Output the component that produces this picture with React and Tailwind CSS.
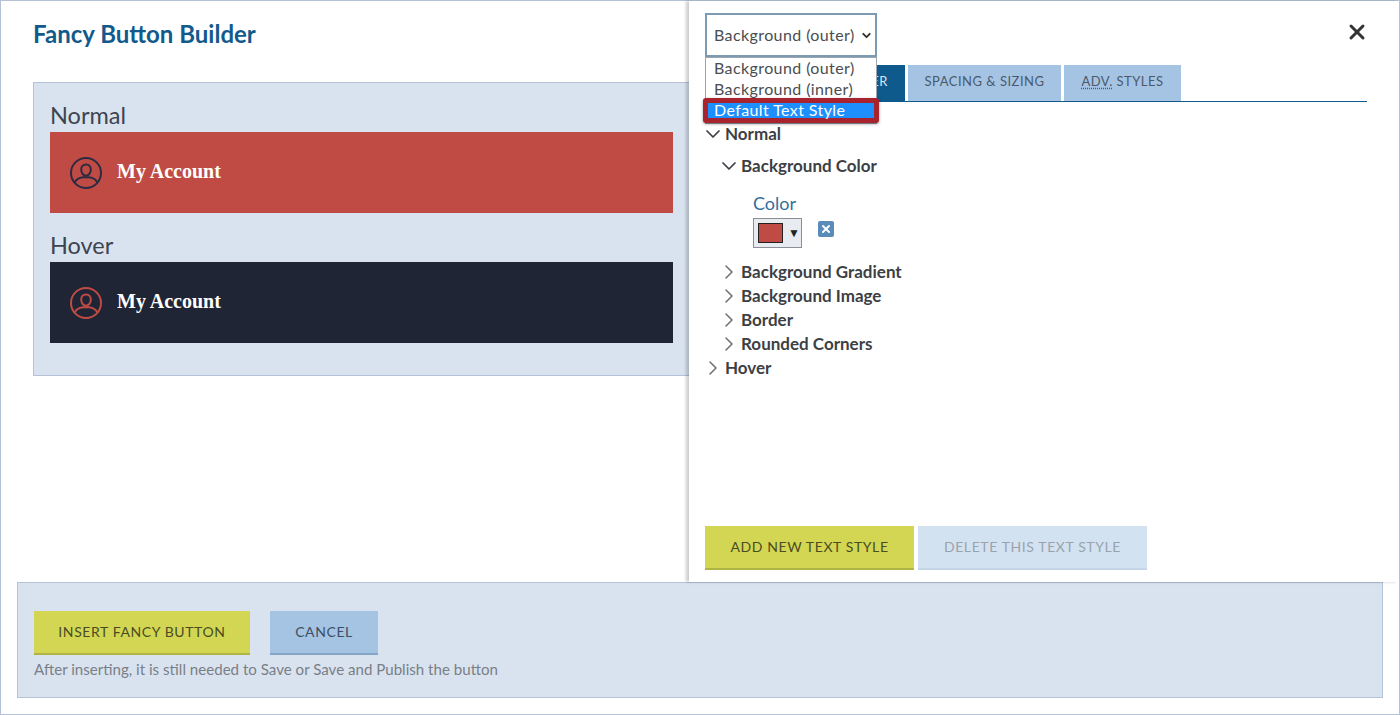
import React from 'react';
import { ChevronDown, ChevronRight, X } from 'lucide-react';

const sans = "font-['Lato','Noto_Sans',sans-serif]";

const AccountIcon = ({ color }) => (
  <svg width="32" height="32" viewBox="0 0 32 32" fill="none" stroke={color} strokeWidth="2">
    <circle cx="16" cy="16" r="15" />
    <path d="M16 7.500c-3 0-4.800 2.300-4.800 5.200 0 3.200 2.100 6 4.800 6s4.800-2.800 4.800-6c0-2.900-1.800-5.200-4.800-5.200z" />
    <path d="M4.500 26c1.500-3.800 5-5.500 8.500-5.800h6c3.500.3 7 2 8.500 5.800" />
  </svg>
);

const PreviewButton = ({ bg, iconColor }) => (
  <div className={`flex h-[81px] items-center gap-[15px] pl-5 ${bg}`}>
    <AccountIcon color={iconColor} />
    <span className="pb-[3px] font-['Liberation_Serif',serif] text-[20px] font-bold text-white">My Account</span>
  </div>
);

const ActionButton = ({ className, children }) => (
  <button className={`flex h-[44px] items-center justify-center border-b-2 pb-px text-[14px] tracking-[0.6px] ${className}`}>
    {children}
  </button>
);

const TreeRow = ({ open, indent, children }) => (
  <div className={`flex h-6 items-center text-[17px] font-bold text-[#3d3f44] ${indent ? 'pl-[16px]' : ''}`}>
    <span className="-ml-1 flex w-6 items-center">
      {open ? (
        <ChevronDown size={24} strokeWidth={1.75} className="text-[#3d3f44]" />
      ) : (
        <ChevronRight size={24} strokeWidth={1.5} className="text-[#6b6e73]" />
      )}
    </span>
    {children}
  </div>
);

export default function App() {
  return (
    <div className={`flex h-[715px] w-[1400px] flex-col border border-[#b3c3d5] bg-white ${sans}`}>
      <div className="flex h-[581px]">
        {/* Preview column */}
        <div className="w-[688px] shrink-0 overflow-hidden pl-8">
          <h1 className="mt-[17px] text-[24px] leading-8 font-bold text-[#125a8c]">Fancy Button Builder</h1>
          <div className="mt-[32px] h-[294px] w-[680px] border border-[#b3c3d5] bg-[#d9e3ef] pt-[16px] pl-4">
            <div className="w-[623px]">
              <div className="h-[33px] text-[23.500px] leading-8 text-[#3d4450]">Normal</div>
              <PreviewButton bg="bg-[#bf4b44]" iconColor="#2c2b42" />
              <div className="mt-[16px] h-[33px] text-[23.500px] leading-8 text-[#3d4450]">Hover</div>
              <PreviewButton bg="bg-[#202536]" iconColor="#bf4b44" />
            </div>
          </div>
        </div>

        {/* Settings column */}
        <div className="relative z-10 flex-1 pt-3 pr-8 pl-4 shadow-[-3px_0_3px_rgba(0,0,0,0.2)]">
          <div className="flex items-start justify-between">
            <div className="flex h-[44px] w-[172px] items-center justify-between border-2 border-[#7d9ab3] pr-[2px] pl-[7px] text-[16px] tracking-[0.4px] text-[#4a4d52]">
              Background (outer)
              <ChevronDown size={13} strokeWidth={3.5} className="text-[#333]" />
            </div>
            <X size={24} strokeWidth={3} className="mt-[7px] -mr-[2px] text-[#333]" />
          </div>

          {/* Style dropdown, open over the tabs */}
          <div className="absolute top-[56px] left-4 z-20 w-[172px] border border-[#9aa5b0] bg-white text-[16px] leading-5 tracking-[0.4px] text-[#4a4d52]">
            <div className="h-5 pl-2">Background (outer)</div>
            <div className="h-5 pt-px pl-2">Background (inner)</div>
            <div className="relative z-10 -mx-[3px] h-[25px] rounded-[3px] border-[5px] border-[#a8232e] bg-[#1e8fff] pl-[6px] leading-[13px] text-white shadow-[0_1px_3px_rgba(0,0,0,0.4)]">
              Default Text Style
            </div>
          </div>

          <div className="mt-2 flex h-[37px] gap-[3px] border-b border-[#125a8c] pb-0 text-[13px] tracking-[0.5px]">
            <div className="flex w-[200px] items-center justify-end bg-[#0f5a8c] pr-[17px] pb-[2px] text-[#d9e3ef]">BORDER</div>
            <div className="flex w-[153px] items-center justify-center bg-[#a5c4e3] pb-[2px] text-[#4a5a6c]">SPACING &amp; SIZING</div>
            <div className="flex w-[117px] items-center justify-center bg-[#a5c4e3] pb-[2px] text-[#4a5a6c]">
              <span className="underline decoration-dotted underline-offset-2">ADV.</span>&nbsp;STYLES
            </div>
          </div>

          <div className="mt-[20px] flex flex-col">
            <TreeRow open>Normal</TreeRow>
            <div className="mt-2">
              <TreeRow open indent>Background Color</TreeRow>
            </div>
            <div className="mt-[13px] ml-[48px]">
              <div className="h-[27px] text-[18px] leading-6 text-[#346f9c]">Color</div>
              <div className="flex items-start">
                <div className="flex h-[30px] w-[49px] items-center gap-[5px] border border-[#8a8f96] bg-[#e8ecf0] pl-[4px]">
                  <div className="h-5 w-[25px] border border-[#222] bg-[#bf4b44]" />
                  <span className="text-[12px] text-[#222]">▼</span>
                </div>
                <div className="mt-[3px] ml-4 flex h-4 w-4 items-center justify-center rounded-[2px] bg-[#5a8cba]">
                  <X size={12} strokeWidth={4} className="text-white" />
                </div>
              </div>
            </div>
            <div className="mt-3">
              <TreeRow indent>Background Gradient</TreeRow>
              <TreeRow indent>Background Image</TreeRow>
              <TreeRow indent>Border</TreeRow>
              <TreeRow indent>Rounded Corners</TreeRow>
              <TreeRow>Hover</TreeRow>
            </div>
          </div>

          <div className="mt-[146px] flex gap-1">
            <ActionButton className="w-[209px] border-[#b0b444] bg-[#d3d653] text-[#4a4c22]">ADD NEW TEXT STYLE</ActionButton>
            <ActionButton className="w-[229px] border-[#c5d6e8] bg-[#d3e2f1] text-[#9aa3ac]">DELETE THIS TEXT STYLE</ActionButton>
          </div>
        </div>
      </div>

      {/* Footer */}
      <div className="mx-4 h-[116px] border border-[#b3c3d5] bg-[#d9e3ef] pt-7 pl-4">
        <div className="flex gap-5">
          <ActionButton className="w-[216px] border-[#b0b444] bg-[#d3d653] text-[#4a4c22]">INSERT FANCY BUTTON</ActionButton>
          <ActionButton className="w-[108px] border-[#86a6c8] bg-[#a5c4e3] text-[#3d4f66]">CANCEL</ActionButton>
        </div>
        <p className="mt-[4px] text-[15.100px] leading-5 text-[#7a7f87]">After inserting, it is still needed to Save or Save and Publish the button</p>
      </div>
    </div>
  );
}
